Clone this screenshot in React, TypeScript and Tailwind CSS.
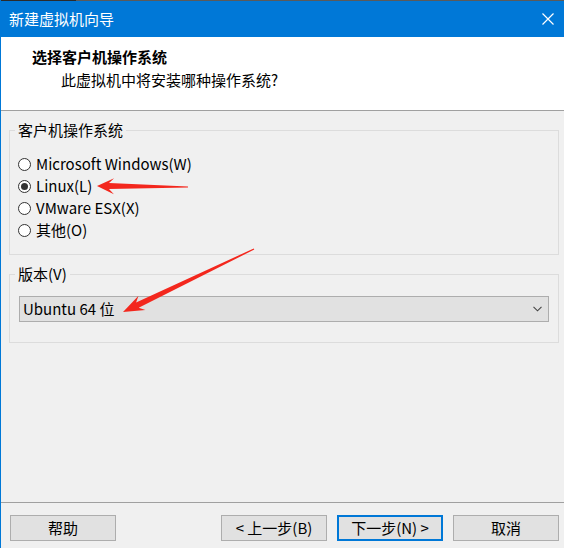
import React from "react";

type Pt = [number, number];

function arrowPoints(tip: Pt, tail: Pt, headLen: number, headHalf: number, neckHalf: number, tailHalf: number): string {
  const dx = tail[0] - tip[0];
  const dy = tail[1] - tip[1];
  const len = Math.hypot(dx, dy);
  const u: Pt = [dx / len, dy / len];
  const n: Pt = [-u[1], u[0]];
  const at = (d: number, p: number): Pt => [tip[0] + u[0] * d + n[0] * p, tip[1] + u[1] * d + n[1] * p];
  const pts: Pt[] = [
    tip,
    at(headLen, headHalf),
    at(headLen - 5, neckHalf),
    [tail[0] + n[0] * tailHalf, tail[1] + n[1] * tailHalf],
    [tail[0] - n[0] * tailHalf, tail[1] - n[1] * tailHalf],
    at(headLen - 5, -neckHalf),
    at(headLen, -headHalf),
  ];
  return pts.map((p) => `${p[0].toFixed(1)},${p[1].toFixed(1)}`).join(" ");
}

function Radio({ checked, label }: { checked?: boolean; label: string }) {
  return (
    <div className="flex items-center h-[22px]">
      <span className="w-[13px] h-[13px] rounded-full border border-[#333333] bg-white flex items-center justify-center">
        {checked && <span className="w-[7px] h-[7px] rounded-full bg-[#333333]" />}
      </span>
      <span className="ml-[5px] leading-[20px]">{label}</span>
    </div>
  );
}

function Btn({ children, primary }: { children: React.ReactNode; primary?: boolean }) {
  return (
    <div
      className={
        "w-[106px] h-[26px] flex items-center justify-center bg-[#e1e1e1] leading-[20px] " +
        (primary ? "border-2 border-[#0078d7]" : "border border-[#adadad]")
      }
    >
      {children}
    </div>
  );
}

export default function App() {
  return (
    <div className="relative w-[564px] h-[548px] bg-[#f0f0f0] text-black text-[15px] font-['Noto_Sans_CJK_SC',sans-serif] overflow-hidden flex flex-col border-l border-[#0078d7]">
      <div className="h-[1px] bg-[linear-gradient(to_right,#2b2b2b_0px,#2b2b2b_75px,#5a5a5a_75px)]" />
      <div className="h-[36px] bg-[#0078d7] flex items-center justify-between text-white">
        <span className="pl-[8px] leading-[20px]">新建虚拟机向导</span>
        <svg width="12" height="12" viewBox="0 0 12 12" className="mr-[10px]">
          <path d="M0.5 0.5 L11.5 11.5 M11.5 0.5 L0.5 11.5" stroke="white" strokeWidth="1.2" />
        </svg>
      </div>
      <div className="h-[74px] bg-white border-b border-[#a0a0a0] pt-[10px]">
        <div className="pl-[31px] font-bold leading-[20px]">选择客户机操作系统</div>
        <div className="pl-[60px] mt-[3px] leading-[20px]">此虚拟机中将安装哪种操作系统?</div>
      </div>
      <div className="flex-1 pt-[9px] pl-[8px] pr-[5px]">
        <fieldset className="border border-[#dcdcdc] pl-[8px] pt-[13px] pb-[13px]">
          <legend className="ml-[-3px] px-[3px] leading-[20px]">客户机操作系统</legend>
          <Radio label="Microsoft Windows(W)" />
          <Radio checked label="Linux(L)" />
          <Radio label="VMware ESX(X)" />
          <Radio label="其他(O)" />
        </fieldset>
        <fieldset className="mt-[9px] border border-[#dcdcdc] pl-[9px] pr-[9px] pt-[12px] pb-[20px]">
          <legend className="ml-[-4px] px-[3px] leading-[20px]">版本(V)</legend>
          <div className="h-[26px] bg-[#e1e1e1] border border-[#adadad] flex items-center justify-between pl-[3px] pr-[6px]">
            <span className="leading-[20px]">Ubuntu 64 位</span>
            <svg width="9" height="6" viewBox="0 0 9 6">
              <path d="M0.5 0.8 L4.5 4.8 L8.5 0.8" stroke="#444" strokeWidth="1.1" fill="none" />
            </svg>
          </div>
        </fieldset>
      </div>
      <div className="border-t border-[#a0a0a0] h-[46px] flex items-center justify-between pl-[9px] pr-[5px] pb-[8px] pt-[12px]">
        <Btn>帮助</Btn>
        <div className="flex gap-[10px]">
          <Btn>&lt; 上一步(B)</Btn>
          <Btn primary>下一步(N) &gt;</Btn>
          <Btn>取消</Btn>
        </div>
      </div>
      <svg className="absolute left-0 top-0 pointer-events-none" width="564" height="548">
        <polygon points={arrowPoints([96, 186], [187, 187], 17, 8, 3, 0.6)} fill="#f3271d" />
        <polygon points={arrowPoints([122, 312], [253, 249], 21, 8, 3, 0.6)} fill="#f3271d" />
      </svg>
    </div>
  );
}
